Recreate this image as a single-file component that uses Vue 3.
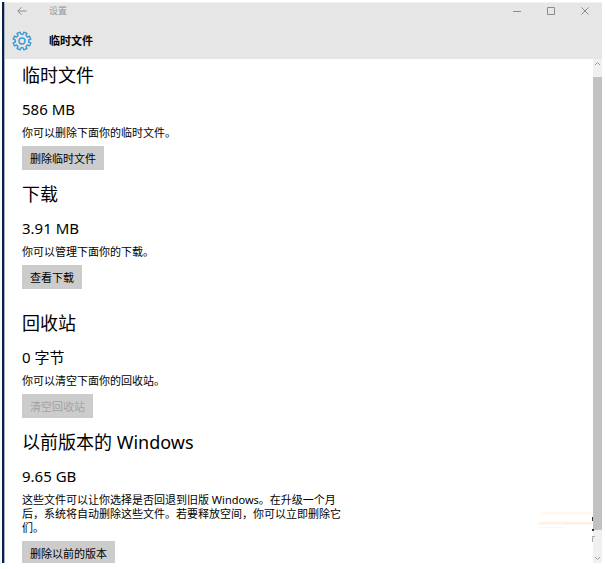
<script setup>
const sections = [
  {
    title: '临时文件',
    size: '586 MB',
    text: '你可以删除下面你的临时文件。',
    action: '删除临时文件',
  },
  {
    title: '下载',
    size: '3.91 MB',
    text: '你可以管理下面你的下载。',
    action: '查看下载',
    spaced: true,
  },
  {
    title: '回收站',
    size: '0 字节',
    text: '你可以清空下面你的回收站。',
    action: '清空回收站',
    disabled: true,
  },
  {
    title: '以前版本的 Windows',
    size: '9.65 GB',
    text: '这些文件可以让你选择是否回退到旧版 Windows。在升级一个月后，系统将自动删除这些文件。若要释放空间，你可以立即删除它们。',
    action: '删除以前的版本',
  },
]

// Gear outline: eight teeth around the hub, first tooth pointing half a step off vertical
const point = (radius, degrees) => {
  const a = (degrees * Math.PI) / 180
  return `${(10 + radius * Math.cos(a)).toFixed(2)} ${(10 + radius * Math.sin(a)).toFixed(2)}`
}
const teeth = []
for (let i = 0; i < 8; i++) {
  const c = i * 45 - 67.5
  teeth.push(point(6.7, c - 14), point(9, c - 11), point(9, c + 11), point(6.7, c + 14))
}
const gear = `M${teeth.join('L')}Z`
</script>

<template>
  <div class="window">
    <header class="header">
      <div class="titlebar">
        <button class="icon-button" aria-label="返回">
          <svg width="10" height="10" viewBox="0 0 10 10"><path d="M9.5 5H1M4.5 1.2L.8 5l3.7 3.8" /></svg>
        </button>
        <span class="app-name">设置</span>
        <div class="controls">
          <button class="icon-button" aria-label="最小化">
            <svg width="8" height="8" viewBox="0 0 8 8"><path d="M0 4.5h8" /></svg>
          </button>
          <button class="icon-button" aria-label="最大化">
            <svg width="8" height="8" viewBox="0 0 8 8"><path d="M.5.5h7v7h-7z" /></svg>
          </button>
          <button class="icon-button" aria-label="关闭">
            <svg width="8" height="8" viewBox="0 0 8 8"><path d="M.4.4l7.2 7.2M7.6.4L.4 7.6" /></svg>
          </button>
        </div>
      </div>
      <div class="page-bar">
        <svg class="gear" width="20" height="20" viewBox="0 0 20 20">
          <path :d="gear" />
          <circle cx="10" cy="10" r="3" />
        </svg>
        <h1 class="page-name">临时文件</h1>
      </div>
    </header>

    <div class="body">
      <main class="content">
        <section
          v-for="s in sections"
          :key="s.title"
          class="section"
          :class="{ spaced: s.spaced }"
        >
          <h2 class="title">{{ s.title }}</h2>
          <p class="size">{{ s.size }}</p>
          <p class="text">{{ s.text }}</p>
          <button class="action" :disabled="s.disabled">{{ s.action }}</button>
        </section>
      </main>
      <div class="scrollbar">
        <svg class="arrow" width="9" height="9" viewBox="0 0 9 9"><path d="M2 6l2.5-2.5L7 6" /></svg>
        <div class="track"><div class="thumb"></div></div>
        <svg class="arrow" width="9" height="9" viewBox="0 0 9 9"><path d="M2 3l2.5 2.5L7 3" /></svg>
      </div>
      <svg class="mark" width="56" height="34" viewBox="0 0 56 34">
        <path fill="#fffaf5" d="M0 4h53v3H0z" />
        <path fill="#fff0e0" d="M0 14h53v2H0z" />
        <path fill="#fff7f4" d="M0 16h53v1H0z" />
        <path fill="#f8f5ff" d="M0 19h26v1H0z" />
        <path fill="#333" d="M53 9h1v4h-1zM53 21h2v2h-2z" />
        <path fill="#aaa" d="M53 28h3v1h-2v5h-1z" />
      </svg>
    </div>
  </div>
</template>

<style>
body {
  margin: 0;
  background: #fff;
}
</style>

<style scoped>
.window {
  box-sizing: border-box;
  display: flex;
  flex-direction: column;
  height: 100vh;
  border: solid #fff;
  border-width: 2px 3px 6px 2px;
  background: linear-gradient(90deg, #03234a 0 2px, #aab4c0 2px 3px, #fff 3px);
  padding-left: 3px;
  color: #000;
  font-family: "Noto Sans", "Noto Sans CJK SC", sans-serif;
  font-size: 11px;
}
.header {
  flex: none;
  border-top: 1px solid #f2f2f2;
  background: #e6e6e6;
}
.titlebar {
  display: flex;
  align-items: center;
  height: 16px;
  padding: 0 13px 0 12px;
}
.icon-button {
  display: flex;
  border: 0;
  padding: 0;
  background: none;
}
.icon-button svg {
  fill: none;
  stroke: #8c8c8c;
}
.app-name {
  margin-left: 22px;
  color: #999;
  font-size: 9px;
  line-height: 16px;
}
.controls {
  display: flex;
  gap: 26px;
  margin-left: auto;
}
.page-bar {
  display: flex;
  align-items: center;
  gap: 17px;
  height: 40px;
  padding: 4px 7px 0;
  box-sizing: border-box;
}
.gear {
  fill: none;
  stroke: #3c9ad3;
  stroke-width: 1.4;
  stroke-linejoin: round;
}
.page-name {
  margin: 0;
  font-size: 11px;
  font-weight: 700;
  line-height: 16px;
}
.body {
  position: relative;
  display: flex;
  flex: 1;
  min-height: 0;
}
.content {
  flex: 1;
  overflow: hidden;
  padding: 3px 17px 0;
}
.section {
  margin-bottom: 12px;
}
.section.spaced {
  margin-bottom: 22px;
}
.title {
  margin: 0 0 11px;
  font-size: 18px;
  font-weight: 400;
  line-height: 26px;
}
.size {
  margin: 0 0 7px;
  font-size: 15px;
  line-height: 20px;
}
.text {
  max-width: 328px;
  margin: 0 0 6px;
  line-height: 14px;
}
.action {
  height: 24px;
  border: 0;
  padding: 0 8px;
  background: #ccc;
  color: #000;
  font: inherit;
}
.section + .section {
  margin-top: -1px;
}
.action:disabled {
  color: #a3a3a3;
}
.scrollbar {
  display: flex;
  flex-direction: column;
  width: 9px;
  background: #f0f0f0;
}
.arrow {
  flex: none;
  fill: none;
  stroke: #999;
}
.track {
  flex: 1;
  padding: 9px 0 24px;
}
.thumb {
  height: 100%;
  background: #c2c2c2;
}
.mark {
  position: absolute;
  right: 7px;
  bottom: 21px;
}
</style>
